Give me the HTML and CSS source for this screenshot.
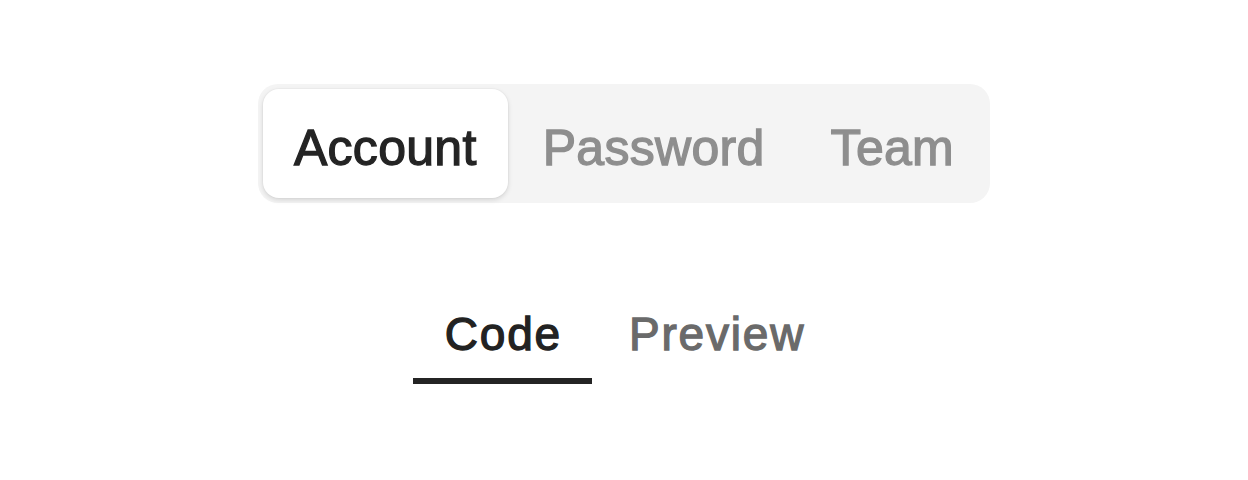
FILE: index.html
```html
<!DOCTYPE html>
<html lang="en">
<head>
<meta charset="utf-8">
<title>Tabs</title>
<link rel="stylesheet" href="styles.css">
</head>
<body>
<main class="page">
  <div class="segmented" role="tablist">
    <button class="seg-tab is-active" role="tab">Account</button>
    <button class="seg-tab" role="tab">Password</button>
    <button class="seg-tab" role="tab">Team</button>
  </div>
  <div class="line-tabs" role="tablist">
    <button class="line-tab is-active" role="tab">Code</button>
    <button class="line-tab" role="tab">Preview</button>
  </div>
</main>
</body>
</html>
```

FILE: styles.css
```css
html, body {
  margin: 0;
  padding: 0;
  background: #ffffff;
}

.page {
  display: flex;
  flex-direction: column;
  align-items: center;
  padding-top: 84px;
  font-family: "Liberation Sans", Arial, sans-serif;
}

button {
  font: inherit;
  border: 0;
  background: none;
  margin: 0;
  cursor: pointer;
  -webkit-text-stroke: 1.3px currentColor;
}

.segmented {
  display: flex;
  gap: 4px;
  padding: 5px;
  background: #f4f4f4;
  border-radius: 20px;
}

.seg-tab {
  box-sizing: border-box;
  height: 109px;
  padding: 8px 31px 0 31px;
  display: flex;
  align-items: center;
  font-size: 50px;
  line-height: 1;
  letter-spacing: 0.3px;
  color: #8e8e8e;
  border-radius: 16px;
}

.seg-tab.is-active {
  background: #ffffff;
  color: #242424;
  box-shadow: 0 2px 5px rgba(0, 0, 0, 0.13), 0 0 0 1px rgba(0, 0, 0, 0.02);
}

.line-tabs {
  display: flex;
  gap: 5px;
  margin-top: 86px;
}

.line-tab {
  padding: 22px 30px 21px 32px;
  font-size: 46px;
  line-height: 1;
  letter-spacing: 1.8px;
  color: #6a6a6a;
  border-bottom: 6px solid transparent;
}

.line-tab.is-active {
  color: #222222;
  border-bottom-color: #242424;
}
```
